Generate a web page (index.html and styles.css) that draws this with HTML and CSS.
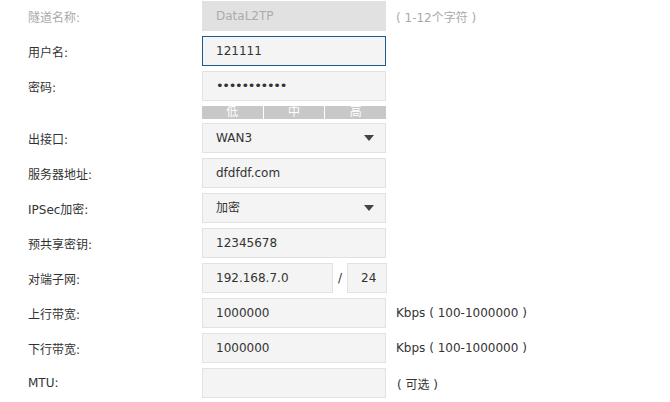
FILE: index.html
```html
<!DOCTYPE html>
<html lang="zh-CN">
<head>
<meta charset="utf-8">
<title>L2TP</title>
<link rel="stylesheet" href="styles.css">
</head>
<body>
<div class="form">
  <div class="row">
    <div class="label disabled">隧道名称:</div>
    <div class="field is-disabled">DataL2TP</div>
    <div class="hint muted">( 1-12个字符 )</div>
  </div>
  <div class="row">
    <div class="label">用户名:</div>
    <div class="field is-focus">121111</div>
  </div>
  <div class="row">
    <div class="label">密码:</div>
    <div class="field pwd">•••••••••••</div>
  </div>
  <div class="strength-row">
    <div class="strength">
      <span>低</span><span>中</span><span>高</span>
    </div>
  </div>
  <div class="row">
    <div class="label">出接口:</div>
    <div class="field select">WAN3<i class="caret"></i></div>
  </div>
  <div class="row">
    <div class="label">服务器地址:</div>
    <div class="field">dfdfdf.com</div>
  </div>
  <div class="row">
    <div class="label">IPSec加密:</div>
    <div class="field select">加密<i class="caret"></i></div>
  </div>
  <div class="row">
    <div class="label">预共享密钥:</div>
    <div class="field">12345678</div>
  </div>
  <div class="row">
    <div class="label">对端子网:</div>
    <div class="subnet">
      <div class="field ip">192.168.7.0</div>
      <span class="slash">/</span>
      <div class="field mask">24</div>
    </div>
  </div>
  <div class="row">
    <div class="label">上行带宽:</div>
    <div class="field">1000000</div>
    <div class="hint">Kbps ( 100-1000000 )</div>
  </div>
  <div class="row">
    <div class="label">下行带宽:</div>
    <div class="field">1000000</div>
    <div class="hint">Kbps ( 100-1000000 )</div>
  </div>
  <div class="row">
    <div class="label">MTU:</div>
    <div class="field"></div>
    <div class="hint opt">( 可选 )</div>
  </div>
</div>
</body>
</html>
```

FILE: styles.css
```css
html, body {
  margin: 0;
  padding: 0;
  background: #ffffff;
}
body {
  font-family: "DejaVu Sans", "Noto Sans CJK SC", sans-serif;
  font-size: 12px;
  color: #333333;
}
.form {
  padding-top: 1px;
  display: flex;
  flex-direction: column;
  gap: 5px;
}
.row {
  display: flex;
  align-items: center;
  height: 30px;
}
.label {
  width: 202px;
  flex: none;
  padding-left: 28px;
  box-sizing: border-box;
  color: #333333;
  white-space: nowrap;
}
.label.disabled {
  color: #a9a9a9;
}
.field {
  box-sizing: border-box;
  width: 184px;
  flex: none;
  height: 30px;
  line-height: 28px;
  border: 1px solid #e2e2e2;
  background: #f4f4f4;
  padding: 0 11px 0 13px;
  color: #333333;
  white-space: nowrap;
  overflow: hidden;
  display: flex;
  align-items: center;
}
.field.is-disabled {
  background: #e1e1e1;
  border-color: #e1e1e1;
  color: #acacac;
}
.field.is-focus {
  border-color: #1b5b90;
}
.field.pwd {
  font-size: 13px;
  letter-spacing: -1.3px;
}
.field.select {
  justify-content: space-between;
}
.caret {
  width: 0;
  height: 0;
  border-left: 5px solid transparent;
  border-right: 5px solid transparent;
  border-top: 6px solid #444444;
}
.hint {
  margin-left: 10px;
  white-space: nowrap;
  color: #333333;
}
.hint.muted {
  color: #a9a9a9;
}
.hint.opt {
  margin-left: 11px;
}
.strength-row {
  display: flex;
  padding-left: 202px;
  margin-bottom: -1px;
}
.strength {
  display: flex;
  gap: 1px;
  width: 184px;
  height: 13px;
}
.strength span {
  flex: 1 1 0;
  background: #c8c8c8;
  color: #ffffff;
  text-align: center;
  font-size: 12px;
  line-height: 13px;
}
.subnet {
  display: flex;
  align-items: center;
  width: 185px;
}
.field.ip {
  width: 131px;
}
.slash {
  width: 14px;
  text-align: center;
  color: #333333;
}
.field.mask {
  width: 40px;
  padding: 0 0 0 13px;
}
```
